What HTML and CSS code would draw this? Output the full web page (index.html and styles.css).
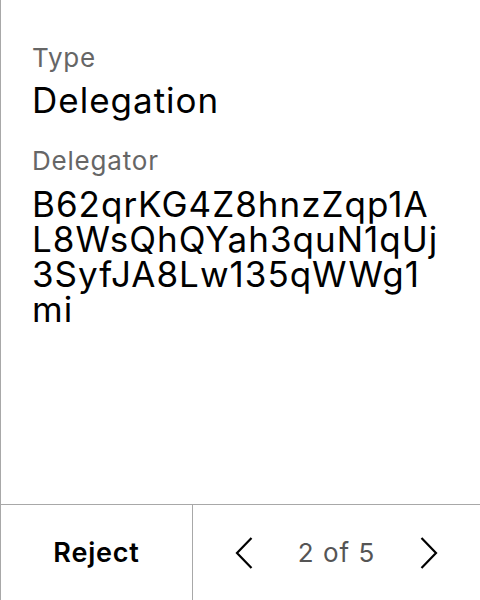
FILE: index.html
```html
<!DOCTYPE html>
<html>
<head>
<meta charset="utf-8">
<link rel="stylesheet" href="styles.css">
</head>
<body>
<div class="panel">
  <div class="content">
    <div class="field">
      <div class="label">Type</div>
      <div class="value">Delegation</div>
    </div>
    <div class="field">
      <div class="label">Delegator</div>
      <div class="value address">B62qrKG4Z8hnzZqp1AL8WsQhQYah3quN1qUj3SyfJA8Lw135qWWg1mi</div>
    </div>
  </div>
  <div class="footer">
    <div class="reject">Reject</div>
    <div class="pager">
      <svg class="chev" width="18" height="32" viewBox="0 0 18 32"><path d="M16.5 1 L2 16 L16.5 31" fill="none" stroke="#000" stroke-width="2.2"/></svg>
      <span class="count">2 of 5</span>
      <svg class="chev" width="18" height="32" viewBox="0 0 18 32"><path d="M1.5 1 L16 16 L1.5 31" fill="none" stroke="#000" stroke-width="2.2"/></svg>
    </div>
  </div>
</div>
</body>
</html>
```
FILE: styles.css
```css
html, body {
  margin: 0;
  padding: 0;
  background: #fff;
}
body {
  font-family: Inter, "Noto Sans", sans-serif;
  color: #000;
}
.panel {
  width: 479px;
  height: 600px;
  border-left: 1px solid #a8a8a8;
  display: flex;
  flex-direction: column;
}
.content {
  flex: 1;
  padding: 42px 0 0 31px;
  display: flex;
  flex-direction: column;
  gap: 25px;
}
.field {
  display: flex;
  flex-direction: column;
  gap: 6px;
}
.label {
  font-size: 26px;
  line-height: 32px;
  letter-spacing: 0.8px;
  color: #666;
}
.value {
  font-size: 35px;
  line-height: 40px;
  letter-spacing: 1px;
}
.address {
  word-break: break-all;
  line-height: 35px;
  width: 413px;
  margin-top: 4px;
}
.footer {
  height: 95px;
  border-top: 1px solid #a8a8a8;
  display: flex;
}
.reject {
  width: 191px;
  border-right: 1px solid #a8a8a8;
  display: flex;
  align-items: center;
  justify-content: center;
  font-size: 27px;
  letter-spacing: 0.8px;
  font-weight: 600;
}
.pager {
  flex: 1;
  display: flex;
  align-items: center;
  justify-content: center;
  gap: 45px;
}
.count {
  font-size: 26px;
  letter-spacing: 1px;
  color: #555;
}
.chev {
  display: block;
}
```
